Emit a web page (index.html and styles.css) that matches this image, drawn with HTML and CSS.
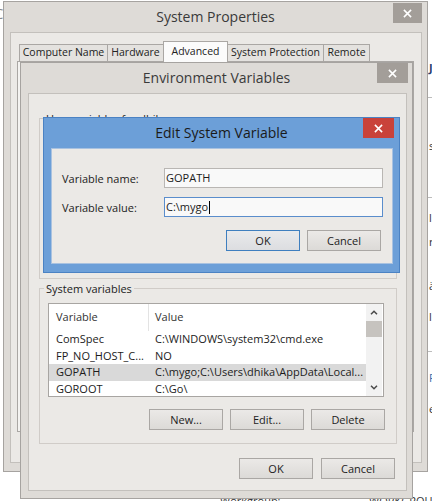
FILE: index.html
```html
<!DOCTYPE html>
<html>
<head>
<meta charset="utf-8">
<title>System Properties</title>
<link rel="stylesheet" href="styles.css">
</head>
<body>
<div class="desktop">
  <div class="bgwin">
    <span class="frag f-c">C</span>
    <span class="frag f-j">J</span>
    <span class="frag f-s">s</span>
    <span class="frag f-l1">l</span>
    <span class="frag f-r">r</span>
    <span class="frag f-a">ä</span>
    <span class="frag f-l2">l</span>
    <span class="frag f-p">P</span>
    <span class="frag f-e">e</span>
    <span class="fline l1"></span>
    <span class="fline l2"></span>
    <span class="fline l3"></span>
    <span class="frag f-wg">Workgroup:</span>
    <span class="frag f-wg2">WORKGROUP</span>
  </div>

  <div class="win sysprops">
    <div class="titlebar">
      <span class="title">System Properties</span>
      <span class="close"><svg viewBox="0 0 10 10" width="9" height="9"><path d="M1 1L9 9M9 1L1 9" stroke="#fff" stroke-width="1.7"/></svg></span>
    </div>
    <div class="client">
      <div class="tabs">
        <span class="tab t-cn">Computer Name</span>
        <span class="tab t-hw">Hardware</span>
        <span class="tab t-adv active">Advanced</span>
        <span class="tab t-sp">System Protection</span>
        <span class="tab t-rm">Remote</span>
      </div>
      <div class="tabpage"></div>
    </div>
  </div>

  <div class="win envvars">
    <div class="titlebar">
      <span class="title">Environment Variables</span>
      <span class="close"><svg viewBox="0 0 10 10" width="9" height="9"><path d="M1 1L9 9M9 1L1 9" stroke="#fff" stroke-width="1.7"/></svg></span>
    </div>
    <div class="client ev-client">
      <fieldset class="group user-group">
        <legend>User variables for dhika</legend>
      </fieldset>
      <fieldset class="group sys-group">
        <legend>System variables</legend>
        <div class="lv">
          <div class="lv-main">
            <div class="lv-row lv-head"><span class="c1">Variable</span><span class="c2">Value</span></div>
            <div class="lv-row"><span class="c1">ComSpec</span><span class="c2">C:\WINDOWS\system32\cmd.exe</span></div>
            <div class="lv-row"><span class="c1">FP_NO_HOST_C...</span><span class="c2">NO</span></div>
            <div class="lv-row sel"><span class="c1">GOPATH</span><span class="c2">C:\mygo;C:\Users\dhika\AppData\Local...</span></div>
            <div class="lv-row"><span class="c1">GOROOT</span><span class="c2">C:\Go\</span></div>
          </div>
          <div class="vscroll">
            <span class="sb-btn"><svg viewBox="0 0 8 5" width="8" height="5"><path d="M1 4.3L4 1.3L7 4.3" fill="none" stroke="#4a4a4a" stroke-width="1.5"/></svg></span>
            <span class="sb-thumb"></span>
            <span class="sb-track"></span>
            <span class="sb-btn down"><svg viewBox="0 0 8 5" width="8" height="5"><path d="M1 0.7L4 3.7L7 0.7" fill="none" stroke="#4a4a4a" stroke-width="1.5"/></svg></span>
          </div>
        </div>
        <div class="btnrow">
          <span class="btn">New...</span>
          <span class="btn">Edit...</span>
          <span class="btn">Delete</span>
        </div>
      </fieldset>
      <div class="btnrow ev-btns">
        <span class="btn">OK</span>
        <span class="btn">Cancel</span>
      </div>
    </div>
  </div>

  <div class="win editvar">
    <div class="titlebar">
      <span class="title">Edit System Variable</span>
      <span class="close"><svg viewBox="0 0 10 10" width="9" height="9"><path d="M1 1L9 9M9 1L1 9" stroke="#fff" stroke-width="1.7"/></svg></span>
    </div>
    <div class="client edit-client">
      <div class="form">
        <span class="lbl">Variable name:</span>
        <span class="input">GOPATH</span>
        <span class="lbl">Variable value:</span>
        <span class="input focus">C:\mygo<span class="caret"></span></span>
      </div>
      <div class="btnrow edit-btns">
        <span class="btn default">OK</span>
        <span class="btn">Cancel</span>
      </div>
    </div>
  </div>
</div>
</body>
</html>
```

FILE: styles.css
```css
* { box-sizing: border-box; }
html, body { margin: 0; padding: 0; }
body {
  width: 432px;
  height: 501px;
  overflow: hidden;
  background: #ffffff;
  font-family: "Open Sans", "Noto Sans", sans-serif;
  font-size: 11px;
  color: #1c1c1c;
}
.desktop { position: relative; width: 432px; height: 501px; overflow: hidden; }

/* background window fragments */
.bgwin { position: absolute; left: 0; top: 0; width: 432px; height: 501px; }
.frag { position: absolute; line-height: 15px; color: #333; white-space: nowrap; }
.f-c { left: -6px; top: 6px; font-size: 15px; color: #8a8a8a; }
.f-j { left: 429px; top: 60px; color: #2b3f6e; font-weight: bold; }
.f-s { left: 429px; top: 138px; }
.f-l1 { left: 429px; top: 210px; }
.f-r { left: 429px; top: 234px; }
.f-a { left: 429px; top: 278px; }
.f-l2 { left: 429px; top: 309px; }
.f-p { left: 429px; top: 370px; color: #3a6ea8; }
.f-e { left: 429px; top: 401px; }
.f-wg { left: 220px; top: 493px; }
.f-wg2 { left: 369px; top: 493px; }
.fline { position: absolute; left: 428px; width: 4px; height: 1px; background: #bdbdbd; }
.l1 { top: 97px; }
.l2 { top: 197px; }
.l3 { top: 351px; }

/* windows */
.win {
  position: absolute;
  display: flex;
  flex-direction: column;
  background: #dedbd7;
  border: 1px solid #a6a3a0;
}
.sysprops { left: 3px; top: 1px; width: 425px; height: 471px; }
.envvars { left: 20px; top: 62px; width: 393px; height: 437px; }
.editvar { left: 43px; top: 117px; width: 357px; height: 156px; background: #6c9fd8; border-color: #4b82c3; }

.titlebar {
  flex: none;
  height: 30px;
  display: grid;
  grid-template-columns: 1fr auto 1fr;
  align-items: start;
}
.title {
  grid-column: 2;
  font-size: 14px;
  line-height: 30px;
  color: #3a3a3a;
  white-space: nowrap;
}
.editvar .title { color: #1a1a1a; }
.close {
  grid-column: 3;
  justify-self: end;
  width: 30px;
  height: 20px;
  background: #a39e99;
  display: flex;
  align-items: center;
  justify-content: center;
}
.sysprops .close { margin: 1px 5px 0 0; width: 29px; }
.envvars .close { margin: 0 4px 0 0; width: 31px; }
.editvar .close { margin: 0 5px 0 0; width: 31px; background: #c9423a; }

.client {
  flex: 1;
  border: 1px solid #c3c0bc;
  background: #ebe9e6;
  min-height: 0;
}
.sysprops .client { margin: 0 5px 8px 6px; display: flex; flex-direction: column; }
.envvars .client { margin: 0 5px 7px 7px; }
.editvar .client { margin: 0 6px 8px 7px; border-color: #a9c2e0; }

/* tabs */
.tabs {
  display: flex;
  align-items: flex-end;
  height: 28px;
  padding-left: 8px;
  flex: none;
}
.tab {
  height: 17px;
  line-height: 15px;
  font-size: 10.5px;
  border: 1px solid #aaa7a4;
  border-bottom: none;
  background: #e4e2df;
  text-align: center;
  white-space: nowrap;
  margin-right: -1px;
  color: #222;
}
.tab.active {
  height: 21px;
  line-height: 18px;
  background: #fbfbfb;
  position: relative;
  z-index: 1;
  margin-bottom: -1px;
}
.t-cn { width: 89px; }
.t-hw { width: 57px; }
.t-adv { width: 65px; }
.t-sp { width: 97px; }
.t-rm { width: 47px; }
.tabpage {
  flex: 1;
  margin: 0 7px 30px 6px;
  border: 1px solid #aaa7a4;
  background: #f4f3f1;
}

/* group boxes */
.group {
  margin: 0;
  border: 1px solid #d0ccc8;
  min-width: 0;
}
.group legend {
  padding: 0 2px;
  margin-left: -4px;
  line-height: 15px;
  color: #222;
}
.user-group { margin: 17px 9px 0 10px; height: 168px; padding: 0 0 0 8px; }
.sys-group { margin: 2px 9px 0 10px; padding: 7px 12px 13px 8px; }

/* list view */
.lv {
  height: 94px;
  border: 1px solid #a8a5a2;
  background: #ffffff;
  display: flex;
  overflow: hidden;
}
.lv-main { flex: 1; min-width: 0; }
.lv-row {
  display: grid;
  grid-template-columns: 100px 1fr;
  height: 16.5px;
  line-height: 16.5px;
  white-space: nowrap;
}
.lv-row span { overflow: hidden; }
.lv-row .c1 { padding-left: 7px; }
.lv-row .c2 { padding-left: 6px; }
.lv-head { height: 27px; line-height: 26px; color: #333; }
.lv-head .c1 { border-right: 1px solid #e3e3e3; }
.lv-row.sel { background: #d9d9d9; }
.vscroll {
  width: 16px;
  margin-right: 1px;
  display: flex;
  flex-direction: column;
  background: #f2f2f2;
}
.sb-btn {
  height: 17px;
  display: flex;
  align-items: center;
  justify-content: center;
  flex: none;
}
.sb-thumb { height: 16px; background: #c6c3bf; flex: none; }
.sb-track { flex: 1; }

/* buttons */
.btnrow { display: flex; justify-content: flex-end; gap: 7px; }
.btn {
  width: 74px;
  height: 21px;
  line-height: 19px;
  text-align: center;
  border: 1px solid #aaa7a4;
  background: linear-gradient(#ebe9e7, #dcdad7);
  color: #1c1c1c;
}
.btn.default { border-color: #3f7fbf; background: linear-gradient(#e9eaec, #dcdde0); }
.sys-group .btnrow { margin-top: 12px; margin-right: -1px; }
.ev-btns { margin: 14px 11px 0 0; gap: 8px; }

/* edit dialog */
.edit-client { padding: 19px 9px 0 10px; }
.form {
  display: grid;
  grid-template-columns: 102px 1fr;
  grid-auto-rows: 20px;
  row-gap: 9px;
  align-items: center;
}
.lbl { white-space: nowrap; color: #1c1c1c; }
.input {
  height: 20px;
  line-height: 18px;
  border: 1px solid #b9b6b3;
  background: #f9f9f9;
  padding-left: 1px;
  white-space: nowrap;
  display: flex;
  align-items: center;
}
.input.focus { border-color: #5a8dcc; }
.caret { display: inline-block; width: 1px; height: 13px; background: #000; margin-left: 1px; }
.edit-btns { margin: 13px 2px 0 0; }
```
